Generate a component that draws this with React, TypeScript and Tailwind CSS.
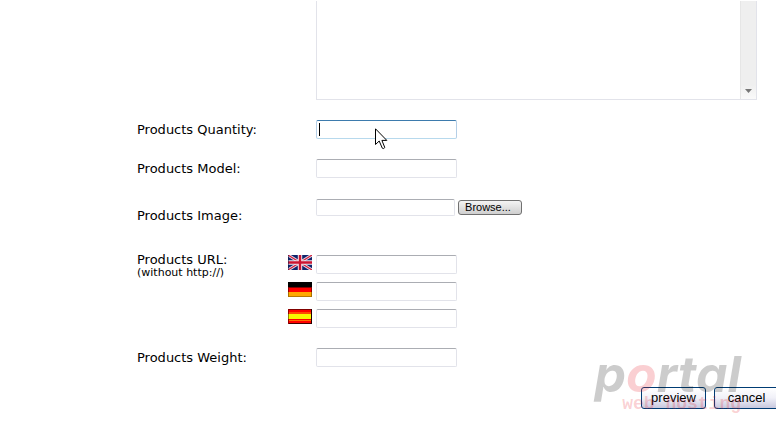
import type { ReactNode } from "react";
import clsx from "clsx";

const ROW = "grid grid-cols-[147px_24px_1fr] gap-x-1";
const FIELD =
  "block border border-[#e2e3ea] border-t-[#abadb3] rounded-[2px] bg-white px-1 text-[13px] outline-none";

function FlagUk() {
  return (
    <svg viewBox="0 0 24 15" className="w-6 h-[15px]" aria-hidden="true">
      <rect width="24" height="15" fill="#10246b" />
      <path d="M0 0L24 15M24 0L0 15" stroke="#e8e0ec" strokeWidth="3" />
      <path d="M0 0L24 15M24 0L0 15" stroke="#d0203c" strokeWidth="1.2" />
      <path d="M12 0V15M0 7.5H24" stroke="#f0e8f0" strokeWidth="4.4" />
      <path d="M12 0V15M0 7.5H24" stroke="#cc1430" strokeWidth="2.4" />
      <path d="M0 0V15" stroke="#081448" strokeWidth="1" />
    </svg>
  );
}

function FlagGermany() {
  return (
    <svg viewBox="0 0 24 15" className="w-6 h-[15px]" shapeRendering="crispEdges" aria-hidden="true">
      <rect width="24" height="5" fill="#000" />
      <rect y="5" width="24" height="5" fill="#f00" />
      <rect y="5" width="24" height="1" fill="#800000" />
      <rect y="10" width="24" height="5" fill="#ffa800" />
      <rect y="14" width="24" height="1" fill="#b87800" />
      <rect y="6" width="1" height="4" fill="#900" />
      <rect x="23" y="6" width="1" height="4" fill="#900" />
      <rect y="10" width="1" height="5" fill="#a87000" />
      <rect x="23" y="10" width="1" height="5" fill="#a87000" />
    </svg>
  );
}

function FlagSpain() {
  return (
    <svg viewBox="0 0 24 15" className="w-6 h-[15px]" shapeRendering="crispEdges" aria-hidden="true">
      <rect width="24" height="15" fill="#f00" />
      <rect width="24" height="1" fill="#800000" />
      <rect y="3" width="24" height="2" fill="#ff4a00" />
      <rect y="5" width="24" height="5" fill="#f8f800" />
      <rect y="10" width="24" height="1" fill="#f00" />
      <rect y="11" width="24" height="1" fill="#ff7000" />
      <rect y="14" width="24" height="1" fill="#400" />
      <rect width="1" height="15" fill="#900" />
      <rect y="5" width="1" height="5" fill="#888800" />
      <rect x="23" width="1" height="15" fill="#200" />
    </svg>
  );
}

const URLS = [
  { id: "url-en", label: "Products URL (English)", Flag: FlagUk },
  { id: "url-de", label: "Products URL (German)", Flag: FlagGermany },
  { id: "url-es", label: "Products URL (Spanish)", Flag: FlagSpain },
];

function Row({ id, label, children }: { id: string; label: string; children: ReactNode }) {
  return (
    <div className={clsx(ROW, "items-center")}>
      <label htmlFor={id}>{label}</label>
      <div className="col-start-3">{children}</div>
    </div>
  );
}

function Pointer() {
  return (
    <svg
      viewBox="0 0 13 22"
      className="absolute left-[59px] top-2 w-[13px] h-[22px] pointer-events-none"
      aria-hidden="true"
    >
      <path
        d="M.5 .8V16.5L4.2 13L7.3 20.2Q8.8 21.2 9.8 19.5L6.9 12.4H11.8Z"
        fill="#fff"
        stroke="#000"
        strokeWidth="1"
      />
    </svg>
  );
}

function FormButton({ children }: { children: ReactNode }) {
  return (
    <button
      type="button"
      className="w-[65px] h-[22px] shrink-0 rounded-[3px] border border-[#003c74] bg-gradient-to-b from-white via-[#f0f0f8] to-[#c8c8de] font-['Liberation_Sans',sans-serif] text-[13px] leading-5 text-black"
    >
      {children}
    </button>
  );
}

export default function App() {
  return (
    <main className="relative overflow-hidden bg-white pt-px pb-3 font-['DejaVu_Sans',Verdana,sans-serif] text-[13px] leading-[14px] text-black">
      <form className="flex flex-col gap-5 pl-[137px]">
        <div className={ROW}>
          <div className="col-start-3 flex h-[99px] w-[441px] border border-t-0 border-[#e2e3ea]">
            <textarea
              aria-label="Products Description"
              className="block flex-1 resize-none overflow-hidden bg-white outline-none"
            />
            <div className="flex w-4 flex-col justify-end border-l border-[#e6e6e6] bg-[#efefef]">
              <div className="flex h-[14px] items-start justify-center bg-gradient-to-b from-[#efefef] to-[#fafafa] pt-1">
                <svg viewBox="0 0 7 4" className="w-[7px] h-1" aria-hidden="true">
                  <path d="M0 0H7L3.5 4Z" fill="#777" />
                </svg>
              </div>
            </div>
          </div>
        </div>

        <Row id="quantity" label="Products Quantity:">
          <div className="relative">
            <input
              id="quantity"
              type="text"
              className="block w-[141px] h-[19px] rounded-[2px] border border-[#b5cfe7] border-t-[#3d7bad] border-b-[#b7d9ed] bg-white px-1 text-[13px] outline-none"
            />
            <span className="absolute left-[3px] top-[3px] h-[13px] w-px bg-black" />
            <Pointer />
          </div>
        </Row>

        <Row id="model" label="Products Model:">
          <input id="model" type="text" className={clsx(FIELD, "w-[141px] h-[19px]")} />
        </Row>

        <div className={clsx(ROW, "h-[35px] pt-px")}>
          <label htmlFor="image" className="self-center">
            Products Image:
          </label>
          <div className="col-start-3 flex items-start gap-[3px]">
            <input id="image" type="text" className={clsx(FIELD, "w-[139px] h-[17px]")} />
            <button
              type="button"
              className="mt-px w-16 h-[15px] rounded-[3px] border border-[#707070] bg-gradient-to-b from-[#f4f4f4] to-[#cfcfcf] pr-1 font-['Liberation_Sans',sans-serif] text-[11px] leading-[13px] text-black"
            >
              Browse...
            </button>
          </div>
        </div>

        <div className={ROW}>
          <label htmlFor="url-en">
            Products URL:
            <span className="block text-[11px] leading-3">(without http://)</span>
          </label>
          <div className="col-span-2 flex flex-col gap-2 pt-0.5">
            {URLS.map(({ id, label, Flag }) => (
              <div key={id} className="flex items-start gap-1">
                <Flag />
                <input id={id} type="text" aria-label={label} className={clsx(FIELD, "w-[141px] h-[19px]")} />
              </div>
            ))}
          </div>
        </div>

        <Row id="weight" label="Products Weight:">
          <input id="weight" type="text" className={clsx(FIELD, "w-[141px] h-[19px]")} />
        </Row>

        <div className="-mr-[3px] flex justify-end gap-2">
          <FormButton>preview</FormButton>
          <FormButton>cancel</FormButton>
        </div>
      </form>

      {/* Host watermark, laid over the corner of the form */}
      <div className="absolute right-[35px] bottom-[9px] flex flex-col items-end whitespace-nowrap pointer-events-none">
        <span className="font-[Inter,sans-serif] text-[50px] leading-[44px] font-bold italic text-black/20">
          p<span className="text-[#e81020]/20">o</span>rtal
        </span>
        <span className="font-['Liberation_Mono',monospace] text-[18px] leading-4 font-bold text-[#e81020]/20">
          web hosting
        </span>
      </div>
    </main>
  );
}
